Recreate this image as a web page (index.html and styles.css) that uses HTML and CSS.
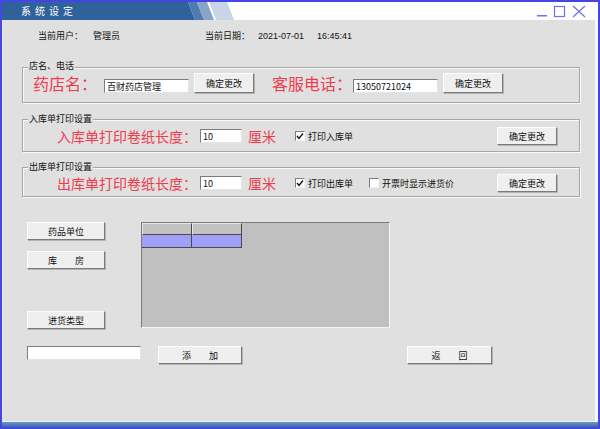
FILE: index.html
```html
<!DOCTYPE html>
<html lang="zh-CN">
<head>
    <meta charset="UTF-8">
    <title>系统设定</title>
    <link rel="stylesheet" href="styles.css">
</head>
<body>

<div class="window">
    <div class="titlebar">
        <svg class="title-bg" width="596" height="18">
            <polygon points="0,0 186,0 193,18 0,18" fill="#2f619b"/>
            <polygon points="186,0 195,0 202,18 193,18" fill="#4d7bb2"/>
            <polygon points="195,0 205,0 212,18 202,18" fill="#86a5c8"/>
            <polygon points="207,0 225,0 232,18 214,18" fill="#c7d5e5"/>
        </svg>
        <span class="title">系统设定</span>
        <svg class="controls" width="54" height="18">
            <rect x="1" y="13" width="10" height="1.5" fill="#6f6ff2"/>
            <rect x="18.5" y="4.5" width="10" height="10" fill="none" stroke="#6f6ff2" stroke-width="1.2"/>
            <path d="M37 4 L49 15 M49 4 L37 15" stroke="#6f6ff2" stroke-width="1.2" fill="none"/>
        </svg>
    </div>

    <div class="client">
        <div class="info">
            <span class="w1">当前用户：</span><span class="w2">管理员</span><span class="w3">当前日期：</span><span class="num w4">2021-07-01</span><span class="num">16:45:41</span>
        </div>

        <div class="group g1">
            <span class="caption">店名、电话</span>
            <div class="row row1">
                <span class="red big name-lbl">药店名：</span>
                <input class="edit e-name" value="百财药店管理">
                <button class="btn b-set">确定更改</button>
                <span class="red big tel-lbl">客服电话：</span>
                <input class="edit e-tel num" value="13050721024">
                <button class="btn b-set">确定更改</button>
            </div>
        </div>

        <div class="group g2">
            <span class="caption">入库单打印设置</span>
            <div class="row">
                <span class="red mid len-lbl">入库单打印卷纸长度：</span>
                <input class="edit e-len num" value="10">
                <span class="red mid unit">厘米</span>
                <span class="check"><svg width="8" height="8"><path d="M1 4 L3 6.5 L7 1.5" stroke="#111" stroke-width="1.4" fill="none"/></svg></span>
                <span class="chk-text">打印入库单</span>
                <button class="btn b-set b-right">确定更改</button>
            </div>
        </div>

        <div class="group g3">
            <span class="caption">出库单打印设置</span>
            <div class="row">
                <span class="red mid len-lbl">出库单打印卷纸长度：</span>
                <input class="edit e-len num" value="10">
                <span class="red mid unit">厘米</span>
                <span class="check"><svg width="8" height="8"><path d="M1 4 L3 6.5 L7 1.5" stroke="#111" stroke-width="1.4" fill="none"/></svg></span>
                <span class="chk-text w-out">打印出库单</span>
                <span class="check"></span>
                <span class="chk-text">开票时显示进货价</span>
                <button class="btn b-set b-right">确定更改</button>
            </div>
        </div>

        <div class="lower">
            <div class="side">
                <button class="btn b-side">药品单位</button>
                <button class="btn b-side b-gap1">库　　房</button>
                <button class="btn b-side b-gap2">进货类型</button>
            </div>
            <div class="grid">
                <div class="grid-row head"><span></span><span></span></div>
                <div class="grid-row sel"><span></span><span></span></div>
            </div>
        </div>

        <div class="bottom">
            <input class="edit e-new" value="">
            <button class="btn b-add">添　　加</button>
            <button class="btn b-back">返　　回</button>
        </div>
    </div>

    <div class="statusbar"></div>
</div>

</body>
</html>
```

FILE: styles.css
```css
html, body {
    margin: 0;
    padding: 0;
    background: #fff;
}

.window {
    width: 600px;
    height: 429px;
    box-sizing: border-box;
    border: 2px solid #4545e6;
    display: flex;
    flex-direction: column;
    font-family: "Noto Sans CJK SC", sans-serif;
    font-size: 9px;
    color: #111;
}

.titlebar {
    position: relative;
    flex: none;
    height: 18px;
    display: flex;
    align-items: center;
    background: #fff;
}
.title-bg {
    position: absolute;
    left: 0;
    top: 0;
}
.title {
    position: relative;
    padding-left: 19px;
    color: #fff;
    font-size: 10px;
    line-height: 18px;
    letter-spacing: 4px;
}
.controls {
    position: relative;
    margin-left: auto;
    margin-right: 8px;
}

.client {
    flex: 1;
    background: #e0e0e0;
    border-left: 1px solid #e6e6f2;
    border-right: 3px solid #f8f8f8;
    padding: 10px 0 0 19px;
}
.statusbar {
    flex: none;
    height: 5px;
    border-top: 1px solid #f2f2f2;
    background: linear-gradient(#6d95c7, #3c6ba6);
}

.num {
    font-family: "Liberation Sans", sans-serif;
}

.info {
    height: 12px;
    line-height: 12px;
    padding-left: 16px;
    display: flex;
}
.w1 { width: 55px; }
.w2 { width: 112px; }
.w3 { width: 53px; }
.w4 { width: 59px; }

/* group boxes */
.group {
    position: relative;
    width: 558px;
    box-sizing: border-box;
    border: 1px solid #a6a6a6;
    box-shadow: inset 1px 1px 0 #fafafa, 1px 1px 0 #fafafa;
}
.caption {
    position: absolute;
    left: 5px;
    top: -7px;
    line-height: 11px;
    padding: 0 1px;
    background: #e0e0e0;
}
.g1 { margin-top: 25px; padding: 5px 0 9px 10px; }
.g1 .caption { top: -8px; }
.g2 { margin-top: 16px; padding: 7px 22px 6px 34px; }
.g3 { margin-top: 15px; padding: 6px 22px 4px 34px; }

.row {
    display: flex;
    align-items: center;
    height: 18px;
}
.row1 {
    align-items: flex-end;
    height: 20px;
}

.red {
    color: #f03a4e;
    white-space: nowrap;
}
.big {
    font-size: 16px;
    line-height: 18px;
    margin-bottom: 1px;
}
.mid {
    font-size: 14px;
    line-height: 16px;
}
.name-lbl { width: 71px; }
.tel-lbl { width: 81px; margin-left: 18px; }
.len-lbl { width: 143px; }
.unit { width: 47px; margin-left: 6px; }

.edit {
    box-sizing: border-box;
    height: 14px;
    margin: 0;
    padding: 0 2px;
    border: 1px solid;
    border-color: #7c7c7c #e4e4e4 #e4e4e4 #7c7c7c;
    background: #fff;
    font: inherit;
    font-size: 9px;
    color: #111;
    outline: none;
}
.e-name { width: 85px; }
.e-tel { width: 85px; }
.e-len { width: 42px; }
.e-new { width: 114px; }

.btn {
    box-sizing: border-box;
    margin: 0;
    padding: 0;
    border: 1px solid;
    border-color: #fdfdfd #7a7a7a #7a7a7a #fdfdfd;
    box-shadow: 1px 1px 0 #b4b4b4;
    background: #efefef;
    font: inherit;
    color: #111;
}
.b-set {
    width: 60px;
    height: 18px;
    margin-left: 5px;
}
.row1 .b-set { height: 20px; }
.b-right { margin-left: auto; }

.check {
    box-sizing: border-box;
    width: 10px;
    height: 10px;
    border: 1px solid;
    border-color: #7c7c7c #f4f4f4 #f4f4f4 #7c7c7c;
    background: #fff;
    display: flex;
    align-items: center;
    justify-content: center;
}
.chk-text { margin-left: 3px; }
.w-out { width: 61px; }

/* lower area */
.lower {
    display: flex;
    align-items: flex-start;
    margin-top: 25px;
    padding-left: 5px;
}
.side {
    width: 78px;
    display: flex;
    flex-direction: column;
}
.b-side { width: 78px; height: 18px; }
.b-gap1 { margin-top: 11px; }
.b-gap2 { margin-top: 42px; }

.grid {
    width: 249px;
    height: 106px;
    margin-left: 36px;
    box-sizing: border-box;
    border: 1px solid;
    border-color: #7a7a7a #f6f6f6 #f6f6f6 #7a7a7a;
    background: #c0c0c0;
}
.grid-row {
    display: flex;
}
.grid-row span {
    box-sizing: border-box;
    width: 50px;
    border-right: 1px solid #4a4a4a;
    border-bottom: 1px solid #4a4a4a;
}
.head span {
    height: 12px;
    background: #c2c2c2;
    border-top: 1px solid #e6e6e6;
    border-left: 1px solid #e6e6e6;
}
.sel span {
    height: 13px;
    background: #a0a0f6;
}

.bottom {
    display: flex;
    align-items: flex-start;
    margin-top: 17px;
    padding-left: 5px;
}
.b-add { width: 84px; height: 18px; margin-left: 17px; }
.b-back { width: 85px; height: 18px; margin-left: 165px; }
```
